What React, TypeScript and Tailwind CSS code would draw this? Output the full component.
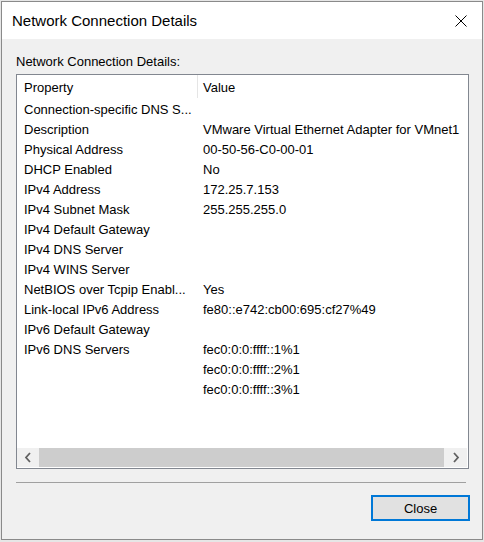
import React from 'react';

const rows: [string, string][] = [
    ["Connection-specific DNS S...", ""],
    ["Description", "VMware Virtual Ethernet Adapter for VMnet1"],
    ["Physical Address", "00-50-56-C0-00-01"],
    ["DHCP Enabled", "No"],
    ["IPv4 Address", "172.25.7.153"],
    ["IPv4 Subnet Mask", "255.255.255.0"],
    ["IPv4 Default Gateway", ""],
    ["IPv4 DNS Server", ""],
    ["IPv4 WINS Server", ""],
    ["NetBIOS over Tcpip Enabl...", "Yes"],
    ["Link-local IPv6 Address", "fe80::e742:cb00:695:cf27%49"],
    ["IPv6 Default Gateway", ""],
    ["IPv6 DNS Servers", "fec0:0:0:ffff::1%1"],
    ["", "fec0:0:0:ffff::2%1"],
    ["", "fec0:0:0:ffff::3%1"],
];

const font = { fontFamily: '"Liberation Sans", Arial, sans-serif' };

const App = () => {
    return (
        <div className="w-[484px] h-[542px] bg-[#e6e6e6] pt-[1px] pl-[1px] text-black" style={font}>
            <div className="w-[482px] h-[539px] border border-[#8a8a8a] flex flex-col">

                {/* title bar */}
                <div className="h-[37px] bg-white flex items-center justify-between pl-[10px] pr-[14px]">
                    <span className="text-[15px] pt-[1px]">Network Connection Details</span>
                    <svg width="12" height="12" viewBox="0 0 12 12" className="mr-[1px]">
                        <path d="M0.5 0.5 L11.5 11.5 M11.5 0.5 L0.5 11.5" stroke="#000" strokeWidth="1" />
                    </svg>
                </div>

                <div className="flex-1 bg-[#f0f0f0] px-[14px] flex flex-col text-[13px]">
                    <div className="mt-[12px] h-[20px] leading-[20px] pt-[1px]">Network Connection Details:</div>

                    <div className="mt-[3px] w-[453px] h-[395px] border border-[#828790] bg-white flex flex-col">
                        <div className="h-[24px] flex items-center">
                            <div className="w-[180px] pl-[7px] pt-[1px]">Property</div>
                            <div className="w-[1px] h-[23px] self-start bg-[#e5e5e5]" />
                            <div className="pl-[5px] pt-[1px]">Value</div>
                        </div>

                        {rows.map(([prop, value], i) => (
                            <div key={i} className="h-[20px] leading-[20px] pt-[1px] flex whitespace-nowrap">
                                <div className="w-[181px] pl-[7px] overflow-hidden">{prop}</div>
                                <div className="pl-[5px]">{value}</div>
                            </div>
                        ))}

                        <div className="flex-1" />

                        <div className="h-[19px] mb-[1px] mr-[1px] flex bg-[#f0f0f0]">
                            <div className="w-[22px] flex items-center justify-center">
                                <svg width="8" height="11" viewBox="0 0 8 11">
                                    <path d="M6 1 L2 5.5 L6 10" stroke="#606060" strokeWidth="1.8" fill="none" />
                                </svg>
                            </div>
                            <div className="flex-1 bg-[#cdcdcd]" />
                            <div className="w-[23px] flex items-center justify-center">
                                <svg width="8" height="11" viewBox="0 0 8 11">
                                    <path d="M2 1 L6 5.5 L2 10" stroke="#606060" strokeWidth="1.8" fill="none" />
                                </svg>
                            </div>
                        </div>
                    </div>

                    <div className="mt-[13px] w-[450px] h-[1px] bg-[#a0a0a0]" />

                    <div className="mt-[12px] flex justify-end -mr-[2px]">
                        <button className="w-[99px] h-[26px] border-2 border-[#0078d7] bg-[#e1e1e1] text-[13px] leading-none">
                            Close
                        </button>
                    </div>
                </div>
            </div>
        </div>
    );
};

export default App;
